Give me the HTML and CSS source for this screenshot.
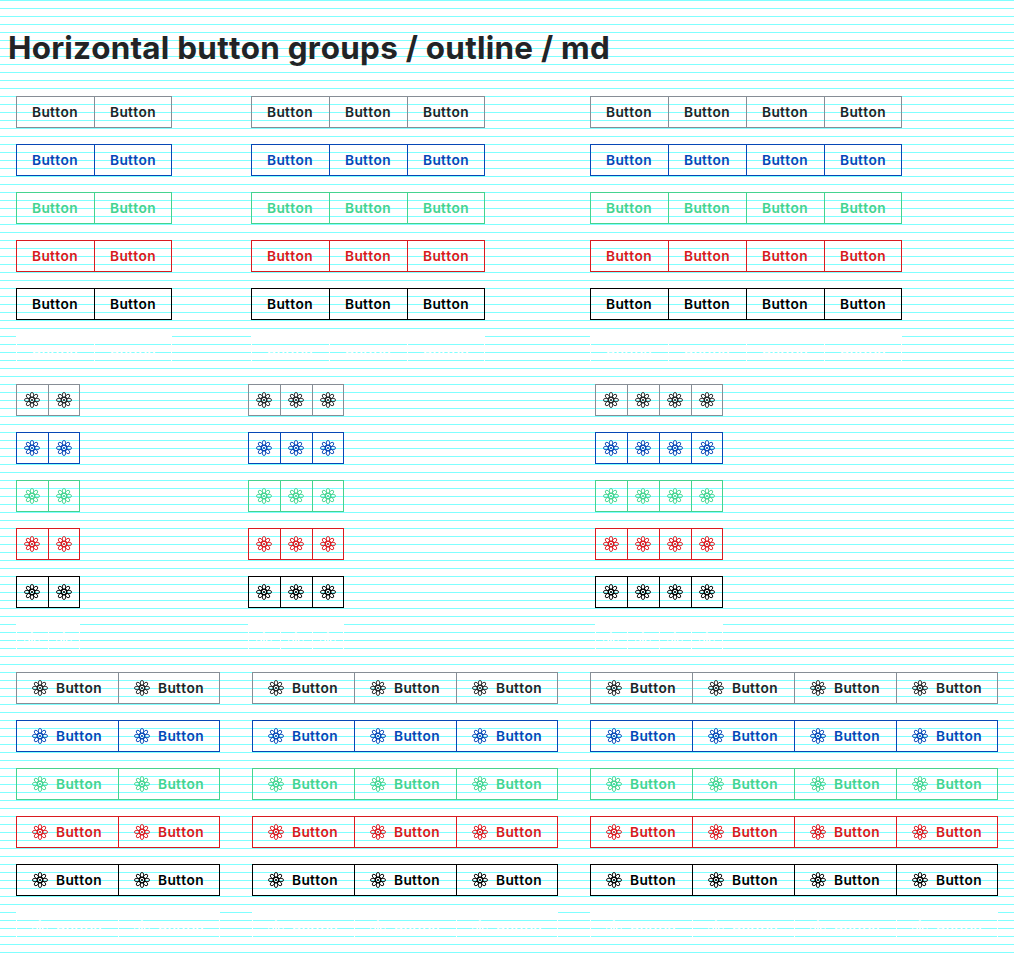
FILE: index.html
```
<!DOCTYPE html>
<html lang="en">
<head>
<meta charset="utf-8">
<title>Horizontal button groups / outline / md</title>
<link rel="stylesheet" href="styles.css">
</head>
<body>
<svg class="sprite" aria-hidden="true">
  <symbol id="atom" viewBox="0 0 16 16">
    <g fill="none" stroke="currentColor" stroke-width="0.9">
      <ellipse cx="3.05" cy="8" rx="2.6" ry="1.7"/>
      <ellipse cx="3.05" cy="8" rx="2.6" ry="1.7" transform="rotate(45 8 8)"/>
      <ellipse cx="3.05" cy="8" rx="2.6" ry="1.7" transform="rotate(90 8 8)"/>
      <ellipse cx="3.05" cy="8" rx="2.6" ry="1.7" transform="rotate(135 8 8)"/>
      <ellipse cx="3.05" cy="8" rx="2.6" ry="1.7" transform="rotate(180 8 8)"/>
      <ellipse cx="3.05" cy="8" rx="2.6" ry="1.7" transform="rotate(225 8 8)"/>
      <ellipse cx="3.05" cy="8" rx="2.6" ry="1.7" transform="rotate(270 8 8)"/>
      <ellipse cx="3.05" cy="8" rx="2.6" ry="1.7" transform="rotate(315 8 8)"/>
      <circle cx="8" cy="8" r="2.8" stroke-width="1.3"/>
    </g>
    <circle cx="8" cy="8" r="1.1" fill="currentColor"/>
  </symbol>
</svg>
<h1 class="title">Horizontal button groups / outline / md</h1>
<main id="groups"></main>
<script src="script.js"></script>
</body>
</html>
```

FILE: styles.css
```
body {
  margin: 0;
  height: 960px;
  overflow: hidden;
  font-family: Inter, sans-serif;
  font-kerning: none;
  color: #222426;
  background: repeating-linear-gradient(to bottom, #80ffff 0, #80ffff 1px, #fff 1px, #fff 8px);
}
.sprite { position: absolute; width: 0; height: 0; }
.title {
  margin: 0;
  padding: 28px 8px 0;
  height: 52px;
  font-size: 31.4px;
  line-height: 40px;
  font-weight: 700;
  letter-spacing: 0.26px;
  white-space: nowrap;
}
.section { display: grid; row-gap: 16px; padding: 16px 0 0 16px; }
.section--text { grid-template-columns: 235px 339px 1fr; }
.section--icon { grid-template-columns: 232px 347px 1fr; }
.section--both { grid-template-columns: 236px 338px 1fr; }
.group { display: flex; height: 32px; }
.btn {
  box-sizing: border-box;
  display: flex;
  align-items: center;
  gap: 8px;
  height: 32px;
  width: 78px;
  padding: 0 0 0 15px;
  border: 1px solid var(--line);
  border-right-width: 0;
  border-radius: 0;
  background: transparent;
  color: var(--ink);
  font: 600 13.7px/20px Inter, sans-serif;
  font-kerning: none;
  letter-spacing: 0.36px;
  white-space: nowrap;
}
.btn:last-child { border-right-width: 1px; }
.section--icon .btn { width: 32px; padding-left: 7px; }
.section--both .btn { width: 102px; }
.icon { flex: none; width: 16px; height: 16px; }
.neutral { --line: #868e96; --ink: #222426; }
.primary { --line: #0747b6; --ink: #0747b6; }
.success { --line: #45d38f; --ink: #45d38f; }
.danger { --line: #d91a20; --ink: #d91a20; }
.black { --line: #000; --ink: #000; }
.white { --line: #fff; --ink: #fff; }
```

FILE: script.js
```
const icon = '<svg class="icon" aria-hidden="true"><use href="#atom"/></svg>';
const content = { text: '<span>Button</span>', icon: icon, both: icon + '<span>Button</span>' };
const tones = ['neutral', 'primary', 'success', 'danger', 'black', 'white'];
document.getElementById('groups').innerHTML = Object.keys(content).map(kind =>
  `<section class="section section--${kind}">` +
  tones.map(tone => [2, 3, 4].map(count =>
    `<div class="group ${tone}">` + `<button class="btn">${content[kind]}</button>`.repeat(count) + '</div>'
  ).join('')).join('') + '</section>'
).join('');
```
